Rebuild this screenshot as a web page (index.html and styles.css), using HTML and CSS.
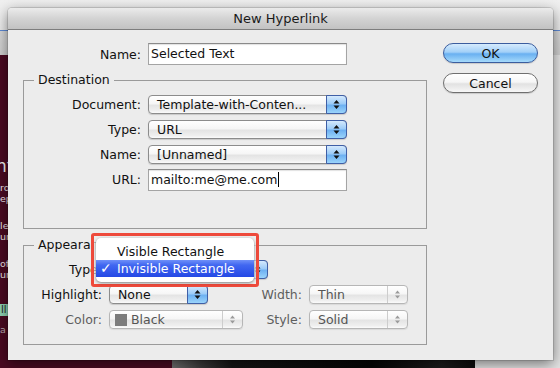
FILE: index.html
```html
<!DOCTYPE html>
<html>
<head>
<meta charset="utf-8">
<title>New Hyperlink</title>
<link rel="stylesheet" href="styles.css">
</head>
<body>
<div class="screen">
  <div class="desktop">
    <div class="desk-top"><div class="blue-line"></div></div>
    <div class="desk-lower">
      <div class="maroon">
        <div class="frag big">nt</div>
        <div class="frag small f-ro">ro</div>
        <div class="frag small">ep</div>
        <div class="frag small f-le">le</div>
        <div class="frag small">ur</div>
        <div class="frag small f-of">of</div>
        <div class="frag small">ur</div>
        <div class="frag tag">ll</div>
        <div class="frag small dim f-a2">a 2</div>
      </div>
      <div class="mid"><div class="dark"></div></div>
      <div class="right"></div>
    </div>
  </div>

  <div class="dialog">
    <div class="titlebar">New Hyperlink</div>
    <div class="dbody">
      <div class="main">
        <div class="name-row">
          <span class="lbl name-lbl">Name:</span>
          <div class="field">Selected Text</div>
        </div>

        <fieldset class="group dest">
          <legend>Destination</legend>
          <div class="dest-grid">
            <span class="lbl">Document:</span>
            <div class="popup"><span class="ptext">Template-with-Conten...</span><span class="stepper"><svg width="7" height="11" viewBox="0 0 7 11"><path d="M3.5 1 L6.5 4.5 H0.5 Z M0.5 6.5 H6.5 L3.5 10 Z"/></svg></span></div>
            <span class="lbl">Type:</span>
            <div class="popup"><span class="ptext">URL</span><span class="stepper"><svg width="7" height="11" viewBox="0 0 7 11"><path d="M3.5 1 L6.5 4.5 H0.5 Z M0.5 6.5 H6.5 L3.5 10 Z"/></svg></span></div>
            <span class="lbl">Name:</span>
            <div class="popup"><span class="ptext">[Unnamed]</span><span class="stepper"><svg width="7" height="11" viewBox="0 0 7 11"><path d="M3.5 1 L6.5 4.5 H0.5 Z M0.5 6.5 H6.5 L3.5 10 Z"/></svg></span></div>
            <span class="lbl">URL:</span>
            <div class="field">mailto:me@me.com<span class="caret"></span></div>
          </div>
        </fieldset>

        <fieldset class="group appear">
          <legend>Appearance</legend>
          <div class="app-grid">
            <span class="lbl">Type:</span>
            <div class="popup type-pop"><span class="ptext">Invisible Rectangle</span><span class="stepper"><svg width="7" height="11" viewBox="0 0 7 11"><path d="M3.5 1 L6.5 4.5 H0.5 Z M0.5 6.5 H6.5 L3.5 10 Z"/></svg></span></div>
            <span></span>
            <span></span>

            <span class="lbl">Highlight:</span>
            <div class="popup hl-pop"><span class="ptext">None</span><span class="stepper"><svg width="7" height="11" viewBox="0 0 7 11"><path d="M3.5 1 L6.5 4.5 H0.5 Z M0.5 6.5 H6.5 L3.5 10 Z"/></svg></span></div>
            <span class="lbl dis-lbl">Width:</span>
            <div class="popup disabled"><span class="ptext">Thin</span><span class="stepper"><svg width="7" height="11" viewBox="0 0 7 11"><path d="M3.5 1.5 L6 4.5 H1 Z M1 6.5 H6 L3.5 9.5 Z"/></svg></span></div>

            <span class="lbl dis-lbl">Color:</span>
            <div class="popup disabled"><span class="ptext"><span class="swatch"></span>Black</span><span class="stepper"><svg width="7" height="11" viewBox="0 0 7 11"><path d="M3.5 1.5 L6 4.5 H1 Z M1 6.5 H6 L3.5 9.5 Z"/></svg></span></div>
            <span class="lbl dis-lbl">Style:</span>
            <div class="popup disabled"><span class="ptext">Solid</span><span class="stepper"><svg width="7" height="11" viewBox="0 0 7 11"><path d="M3.5 1.5 L6 4.5 H1 Z M1 6.5 H6 L3.5 9.5 Z"/></svg></span></div>
          </div>
        </fieldset>
      </div>

      <div class="buttons">
        <button class="btn ok">OK</button>
        <button class="btn">Cancel</button>
      </div>
    </div>
  </div>

  <div class="callout">
    <div class="menu">
      <div class="item">Visible Rectangle</div>
      <div class="item selected"><span class="check">✓</span>Invisible Rectangle</div>
    </div>
  </div>
</div>
</body>
</html>
```

FILE: styles.css
```css
* { box-sizing: border-box; }

body {
  margin: 0;
  font-family: "DejaVu Sans", "Liberation Sans", sans-serif;
  font-size: 12.5px;
  color: #111;
}

.screen {
  position: relative;
  width: 560px;
  height: 368px;
  overflow: hidden;
  background: #e6e6e6;
}

/* ---------- desktop behind the dialog ---------- */
.desktop {
  display: flex;
  flex-direction: column;
  height: 368px;
}
.desk-top {
  height: 55px;
  background: linear-gradient(#f0f0f0 0, #ececec 30px, #d8d8d8 31px, #cfcfcf 55px);
}
.blue-line {
  margin-top: 30px;
  height: 1px;
  background: #5d8ad6;
}
.desk-lower {
  flex: 1;
  display: flex;
}
.maroon {
  width: 172px;
  background: #4b0a22;
  color: #f1e6ea;
  display: flex;
  flex-direction: column;
  padding-top: 101px;
  overflow: hidden;
  white-space: nowrap;
}
.frag { margin-left: 0; }
.frag.big { font-size: 17px; line-height: 20px; margin-left: -4px; color: #f4f4f4; }
.frag.small { font-size: 9.5px; line-height: 11px; }
.f-ro { margin-top: 6px; }
.f-le { margin-top: 16px; }
.f-of { margin-top: 16px; }
.tag {
  margin-top: 24px;
  width: 30px;
  height: 12px;
  background: #8ed3b3;
  color: #222;
  font-size: 10px;
  line-height: 12px;
  padding-left: 1px;
}
.dim { color: #b9aab0; }
.f-a2 { margin-top: 8px; }

.mid {
  width: 303px;
  display: flex;
  flex-direction: column;
  justify-content: flex-end;
  background: #e2e2e2;
}
.dark {
  height: 24px;
  background: linear-gradient(90deg, #707070 0, #3a3a3a 30px, #151515 60px, #050505 200px, #1d1d1d 270px, #0b0b0b 303px);
}
.right {
  flex: 1;
  background: #e4e4e4;
}

/* ---------- dialog ---------- */
.dialog {
  position: absolute;
  left: 8px;
  top: 8px;
  width: 545px;
  height: 352px;
  background: #ececec;
  border-radius: 4px 4px 0 0;
  box-shadow: 0 4px 14px rgba(0, 0, 0, 0.5), 0 0 0 1px rgba(0, 0, 0, 0.12);
}
.titlebar {
  height: 22px;
  border-bottom: 1px solid #7d7d7d;
  border-radius: 4px 4px 0 0;
  background: linear-gradient(#ebebeb, #d3d3d3 50%, #c2c2c2);
  text-align: center;
  font-size: 13px;
  line-height: 21px;
  color: #1a1a1a;
}
.dbody {
  display: flex;
  gap: 16px;
  padding: 13px 15px 0 15px;
}
.main {
  width: 404px;
  display: flex;
  flex-direction: column;
}
.lbl {
  text-align: right;
  white-space: nowrap;
}
.name-row {
  display: flex;
  align-items: center;
  gap: 7px;
  height: 22px;
}
.name-lbl { width: 118px; }

.field {
  width: 199px;
  height: 22px;
  background: #fff;
  border: 1px solid #a4a4a4;
  border-top-color: #8a8a8a;
  box-shadow: inset 0 1px 1px rgba(0, 0, 0, 0.12);
  padding-left: 2px;
  line-height: 20px;
  white-space: nowrap;
  display: flex;
  align-items: center;
}
.caret {
  display: inline-block;
  width: 1px;
  height: 15px;
  background: #000;
  margin-left: 1px;
}

/* ---------- groups ---------- */
.group {
  margin: 7px 0 0;
  padding: 0;
  border: 1px solid #9a9a9a;
  min-width: 0;
}
.group legend {
  margin-left: 10px;
  padding: 0 4px;
  line-height: 16px;
  font-size: 12.5px;
}
.appear { margin-top: 8px; }

.dest-grid {
  display: grid;
  grid-template-columns: 117px 199px;
  grid-auto-rows: 25px;
  column-gap: 7px;
  align-items: center;
  padding: 4px 0 36px;
}
.app-grid {
  display: grid;
  grid-template-columns: 78px 134px 52px 99px;
  grid-auto-rows: 25px;
  column-gap: 7px;
  align-items: center;
  padding: 4px 0 12px;
}

/* ---------- popups ---------- */
.popup {
  position: relative;
  display: flex;
  align-items: stretch;
  height: 19px;
  border: 1px solid #8c8c8c;
  border-radius: 4px;
  background: linear-gradient(#ffffff 0, #f6f6f6 45%, #e4e4e4 55%, #efefef 85%, #fbfbfb 100%);
  box-shadow: 0 1px 1px rgba(0, 0, 0, 0.15);
  white-space: nowrap;
}
.ptext {
  flex: 1;
  padding-left: 8px;
  line-height: 17px;
  overflow: hidden;
  display: flex;
  align-items: center;
}
.stepper {
  width: 21px;
  margin: -1px -1px -1px 0;
  border: 1px solid #3f5fa6;
  border-radius: 0 4px 4px 0;
  background: linear-gradient(#d4e9fd 0, #9dccf8 45%, #6eb1f2 55%, #9ad4fb 100%);
  display: flex;
  align-items: center;
  justify-content: center;
}
.stepper svg { fill: #111; }

.type-pop { width: 159px; }
.hl-pop { width: 99px; }

.popup.disabled {
  border-color: #b6b6b6;
  color: #555;
  box-shadow: 0 1px 1px rgba(0, 0, 0, 0.08);
}
.popup.disabled .stepper {
  background: none;
  border: none;
  border-left: 1px solid #cdcdcd;
  margin: 0;
  width: 20px;
}
.popup.disabled .stepper svg { fill: #9a9a9a; }
.dis-lbl { color: #5e5e5e; }
.swatch {
  display: inline-block;
  width: 12px;
  height: 12px;
  background: #7c7c7c;
  margin: 0 4px 0 -3px;
}

/* ---------- buttons ---------- */
.buttons {
  width: 95px;
  display: flex;
  flex-direction: column;
  gap: 10px;
}
.btn {
  height: 20px;
  border-radius: 10px;
  font-family: inherit;
  font-size: 12.5px;
  color: #111;
  padding: 0;
  border: 1px solid #6f6f6f;
  background: linear-gradient(#ffffff 0, #f6f6f6 45%, #e2e2e2 55%, #f7f7f7 100%);
  box-shadow: 0 1px 1px rgba(0, 0, 0, 0.15);
}
.btn.ok {
  border-color: #3b5d9e;
  background: linear-gradient(#d6ebfd 0, #a2d0f8 45%, #69b0f1 55%, #a6dafb 100%);
}

/* ---------- highlighted pop-up menu ---------- */
.callout {
  position: absolute;
  left: 91px;
  top: 233px;
  width: 168px;
  height: 54px;
  border: 3px solid #ee4a3b;
  border-radius: 3px;
  padding: 2px;
  background: rgba(236, 236, 236, 0.7);
}
.menu {
  height: 44px;
  background: #fff;
  border-radius: 5px;
  padding: 5px 0 5px;
  box-shadow: 0 1px 3px rgba(0, 0, 0, 0.45);
}
.item {
  position: relative;
  height: 17px;
  line-height: 17px;
  padding-left: 21px;
  white-space: nowrap;
  color: #111;
}
.item.selected {
  color: #fff;
  background: linear-gradient(#6f90f8 0, #4167f1 30%, #2448e5 100%);
}
.check {
  position: absolute;
  left: 4px;
  top: 0;
  font-size: 14px;
  font-weight: bold;
}
```
